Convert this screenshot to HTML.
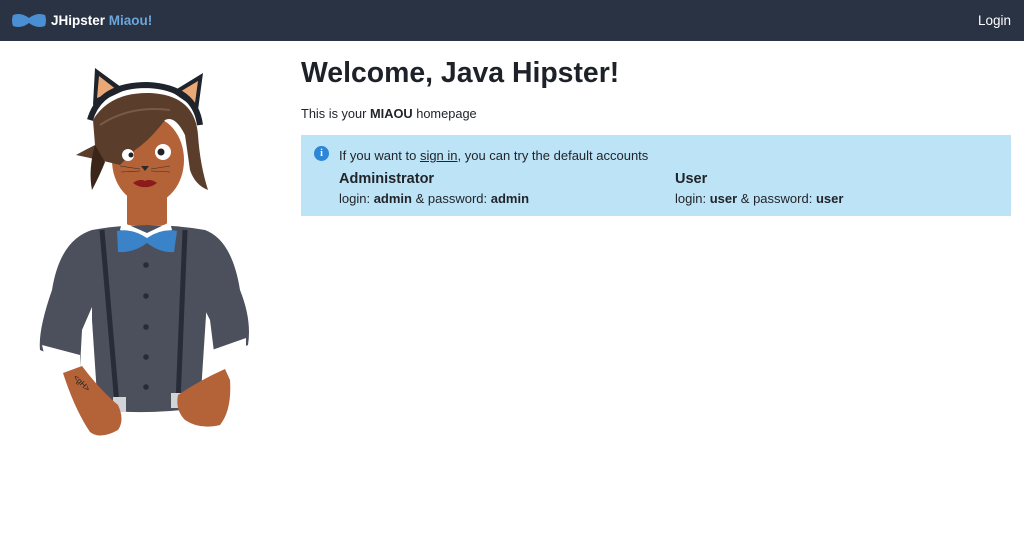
<!DOCTYPE html>
<html><head><meta charset="utf-8"><style>
*{margin:0;padding:0;box-sizing:border-box}
body{width:1024px;height:560px;background:#fff;font-family:"Liberation Sans",sans-serif;color:#212529;position:relative;overflow:hidden}
.nav{position:absolute;left:0;top:0;width:1024px;height:41px;background:#2a3344}
.brand{position:absolute;left:51px;top:13px;font-size:13.5px;font-weight:bold;color:#fff}
.brand span{color:#6aa6dc}
.login{position:absolute;right:13px;top:13px;font-size:13.5px;color:#fff}
h1{position:absolute;left:301px;top:57px;font-size:28.4px;font-weight:bold;color:#1d2128}
.lead{position:absolute;left:301px;top:106px;font-size:12.8px}
.alert{position:absolute;left:301px;top:135px;width:710px;height:81px;background:#bde3f7}
.alert .t{position:absolute;left:38px;top:13px;font-size:13px}
.alert u{text-decoration:underline}
.h{position:absolute;top:36px;font-size:14.5px;font-weight:bold}
.l{position:absolute;top:56px;font-size:13px}
.ic{position:absolute;left:13px;top:11px;width:15px;height:15px;border-radius:50%;background:#2e86d6;color:#fff;font-size:10px;font-weight:bold;text-align:center;line-height:15px;font-family:"Liberation Serif",serif}
</style></head><body>
<div class="nav">
<svg style="position:absolute;left:12px;top:12px" width="34" height="17" viewBox="0 0 34 17"><path d="M1 3 Q9 0 17 6 Q25 0 33 3 Q35 8.5 33 14 Q25 17 17 11 Q9 17 1 14 Q-1 8.5 1 3Z" fill="#4a8fd4"/></svg>
<div class="brand">JHipster <span>Miaou!</span></div>
<div class="login">Login</div>
</div>
<svg style="position:absolute;left:0;top:0" width="300" height="450" viewBox="0 0 300 450">
<path d="M92 230 Q60 240 52 290 Q38 330 40 350 L80 367 L82 330 L95 300Z" fill="#4b505c"/>
<path d="M205 230 Q232 240 240 290 Q252 320 248 345 L215 360 L210 320 L200 300Z" fill="#4b505c"/>
<path d="M42 345 L80 355 L80 370 L46 362Z" fill="#fff"/>
<path d="M212 350 L246 338 L246 352 L214 362Z" fill="#fff"/>
<path d="M92 230 Q147 220 205 230 L207 300 L200 408 Q147 415 98 410 L92 320Z" fill="#4b505c"/>
<path d="M102 230 L117 405" stroke="#272c38" stroke-width="5"/>
<path d="M185 230 L178 403" stroke="#272c38" stroke-width="5"/>
<rect x="113" y="397" width="13" height="15" fill="#d2d4d8"/>
<rect x="171" y="393" width="13" height="15" fill="#d2d4d8"/>
<g fill="#272c38"><circle cx="146" cy="265" r="2.8"/><circle cx="146" cy="296" r="2.8"/><circle cx="146" cy="327" r="2.8"/><circle cx="146" cy="357" r="2.8"/><circle cx="146" cy="387" r="2.8"/></g>
<path d="M63 373 L82 366 Q100 390 118 405 Q125 420 118 430 Q100 440 90 432 Q75 410 63 373Z" fill="#b46238"/>
<path d="M178 395 Q200 380 225 369 L230 380 Q232 410 220 425 Q200 430 185 420 Q175 410 178 395Z" fill="#b46238"/>
<text x="70" y="385" font-size="8" fill="#222" transform="rotate(45 80 385)" font-family="Liberation Sans,sans-serif">&lt;gH&gt;</text>
<path d="M127 185 L167 185 L167 225 L127 225Z" fill="#b46238"/>
<path d="M122 222 L147 233 L170 222 L172 230 L147 240 L120 230Z" fill="#fff"/>
<path d="M117 231 Q132 228 147 238 Q162 228 177 231 L174 252 Q160 253 147 243 Q134 253 118 252Z" fill="#3a83c9"/>
<path d="M93 105 L95 68 L125 90Z" fill="#1f232b"/><path d="M97 98 L99 76 L117 90Z" fill="#eba877"/>
<path d="M172 92 L203 73 L198 110Z" fill="#1f232b"/><path d="M178 93 L198 81 L195 103Z" fill="#eba877"/>
<path d="M90 120 Q100 85 147 85 Q195 87 200 125" stroke="#1f232b" stroke-width="6" fill="none"/>
<ellipse cx="148" cy="160" rx="36" ry="44" fill="#b46238"/>
<path d="M93 120 Q110 92 150 93 Q195 95 198 135 Q200 165 208 190 Q195 185 190 170 L185 135 Q175 115 165 120 Q150 140 135 150 L120 165 Q100 160 76 155 Q85 150 95 145Z" fill="#5a3d2a"/>
<path d="M95 145 Q88 170 92 190 Q100 175 105 162Z" fill="#3a2518"/>
<path d="M100 125 Q130 105 170 110" stroke="#7a5a45" stroke-width="2" fill="none"/>
<circle cx="128" cy="155" r="6" fill="#fff"/><circle cx="131" cy="155" r="2.5" fill="#222"/>
<circle cx="163" cy="152" r="8" fill="#fff"/><circle cx="161" cy="152" r="3.5" fill="#222"/>
<path d="M141 166 L149 166 L145 171Z" fill="#2a2a2a"/>
<path d="M133 183 Q140 178 145 181 Q150 178 157 183 Q150 188 145 187 Q140 188 133 183Z" fill="#8b1a1a"/>
<g stroke="#333" stroke-width=".6"><path d="M140 169 L120 166 M140 171 L121 172 M151 169 L170 166 M151 171 L170 172"/></g>
</svg>
<h1>Welcome, Java Hipster!</h1>
<div class="lead">This is your <b>MIAOU</b> homepage</div>
<div class="alert">
<div class="ic">i</div>
<div class="t">If you want to <u>sign in</u>, you can try the default accounts</div>
<div class="h" style="left:38px">Administrator</div>
<div class="l" style="left:38px">login: <b>admin</b> &amp; password: <b>admin</b></div>
<div class="h" style="left:374px">User</div>
<div class="l" style="left:374px">login: <b>user</b> &amp; password: <b>user</b></div>
</div>
</body></html>
